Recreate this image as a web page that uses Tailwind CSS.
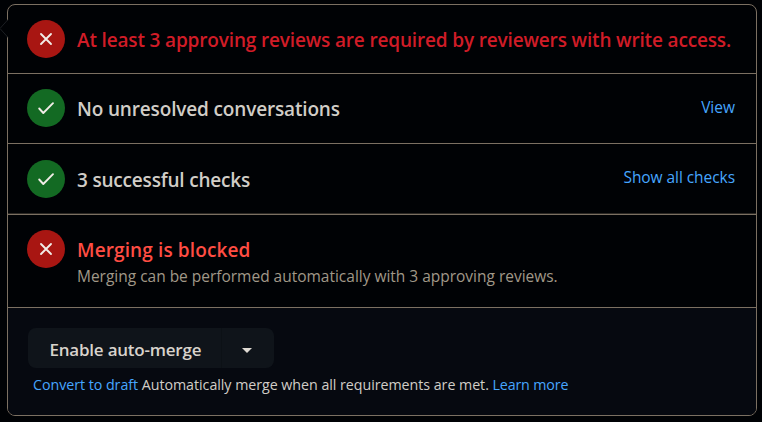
<!DOCTYPE html>
<html lang="en">
<head>
<meta charset="utf-8">
<title>Merge status</title>
<script src="https://cdn.jsdelivr.net/npm/@tailwindcss/browser@4"></script>
</head>
<body class="h-[422px] overflow-hidden bg-[#000205] pt-1 pr-[5px] pl-[7px] font-['Open_Sans','Noto_Sans',sans-serif] whitespace-nowrap text-[#d1cdc7]">
<main class="relative flex h-[412px] w-[750px] flex-col rounded-lg border border-[#7b7062] bg-[#000205]">
  <!-- pointer towards the timeline -->
  <svg class="absolute -left-2 top-[13px]" width="9" height="21" viewBox="0 0 9 21" fill="none"><path d="M8.5 1L0 10.500L8.500 20z" fill="#000205"/><path d="M8 1.500L0 10.500L8 19.500" stroke="#1b1f23"/></svg>

  <section class="flex h-[69px] items-start border-b border-[#7b7062] pl-[19px] pt-[14.5px]">
    <div class="flex size-[38px] shrink-0 items-center justify-center rounded-full bg-[#a81612]">
      <svg width="14" height="14" viewBox="0 0 14 14" fill="none" stroke="#f1ece7" stroke-width="1.900" stroke-linecap="round"><path d="M2 2L12 12M12 2L2 12"/></svg>
    </div>
    <h3 class="ml-3 mt-[6.5px] text-[19px] leading-[28px] font-semibold tracking-[-0.156px] text-[#d01c27]">At least 3 approving reviews are required by reviewers with write access.</h3>
  </section>

  <section class="flex h-[70px] items-start border-b border-[#7b7062] pl-[19px] pr-[21px] pt-[15px]">
    <div class="flex size-[38px] shrink-0 items-center justify-center rounded-full bg-[#136a23]">
      <svg width="18" height="14" viewBox="0 0 18 14" fill="none" stroke="#f1ece7" stroke-width="1.900" stroke-linecap="round" stroke-linejoin="round"><path d="M2.200 7.500L6.300 12L16 2.200"/></svg>
    </div>
    <h3 class="ml-3 mt-[6px] text-[19px] leading-[28px] font-semibold tracking-[-0.157px]">No unresolved conversations</h3>
    <a class="ml-auto mt-[6px] text-[15.5px] leading-6 text-[#46a6ff]">View</a>
  </section>

  <section class="flex h-[71px] items-start border-b border-[#7b7062] pl-[19px] pr-[21px] pt-[15.5px] shadow-[inset_0_-1px_0_#2b2824]">
    <div class="flex size-[38px] shrink-0 items-center justify-center rounded-full bg-[#136a23]">
      <svg width="18" height="14" viewBox="0 0 18 14" fill="none" stroke="#f1ece7" stroke-width="1.900" stroke-linecap="round" stroke-linejoin="round"><path d="M2.200 7.500L6.300 12L16 2.200"/></svg>
    </div>
    <h3 class="ml-3 mt-[6.5px] text-[19px] leading-[28px] font-semibold tracking-[-0.19px]">3 successful checks</h3>
    <a class="ml-auto mt-[5.5px] text-[15.5px] leading-6 tracking-[-0.06px] text-[#46a6ff]">Show all checks</a>
  </section>

  <section class="flex h-[93px] items-start border-b border-[#7b7062] pl-[19px] pt-[15px]">
    <div class="flex size-[38px] shrink-0 items-center justify-center rounded-full bg-[#a81612]">
      <svg width="14" height="14" viewBox="0 0 14 14" fill="none" stroke="#f1ece7" stroke-width="1.900" stroke-linecap="round"><path d="M2 2L12 12M12 2L2 12"/></svg>
    </div>
    <div class="ml-3 mt-[6px]">
      <h3 class="text-[19px] leading-[28px] font-semibold tracking-[0.12px] text-[#ff4d43]">Merging is blocked</h3>
      <p class="text-[15.5px] leading-6 tracking-[-0.015px] text-[#a09888]">Merging can be performed automatically with 3 approving reviews.</p>
    </div>
  </section>

  <footer class="flex-1 rounded-b-[7px] bg-[#060910] pl-5 pt-5">
    <div class="flex h-10 w-[246px] rounded-lg bg-[#0f141a] text-[#d8d3cc]">
      <button class="w-[194px] border-r border-[#0c1116] pl-[21.5px] pt-[3px] text-left text-[17px] font-semibold tracking-[-0.22px]">Enable auto-merge</button>
      <button class="flex w-[50px] items-center justify-center pt-1" aria-label="Select merge method">
        <svg width="10" height="5" viewBox="0 0 10 5"><path d="M0 0H10L5 5z" fill="#e0dbd4"/></svg>
      </button>
    </div>
    <p class="ml-[5px] mt-[5px] text-[14.25px] leading-6 tracking-[-0.04px]"><a class="text-[#46a6ff]">Convert to draft</a> Automatically merge when all requirements are met. <a class="tracking-[-0.15px] text-[#46a6ff]">Learn more</a></p>
  </footer>
</main>
</body>
</html>
